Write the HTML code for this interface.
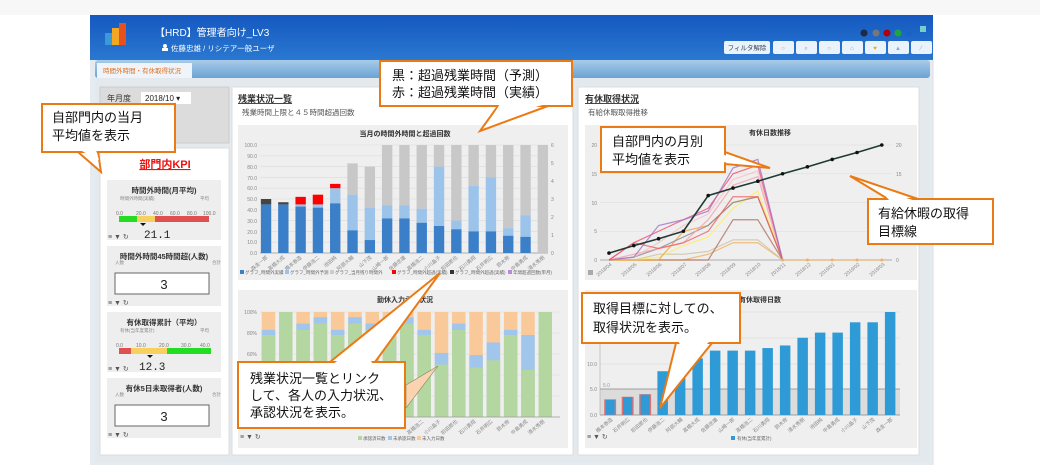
<!DOCTYPE html>
<html><head><meta charset="utf-8"><style>
html,body{margin:0;padding:0;background:#fff;}
svg{display:block;font-family:"Liberation Sans","Noto Sans CJK JP",sans-serif;}
</style></head><body>
<svg width="1040" height="473" viewBox="0 0 1040 473" xmlns="http://www.w3.org/2000/svg">
<defs>
<linearGradient id="hd" x1="0" y1="0" x2="0" y2="1"><stop offset="0" stop-color="#1558c0"/><stop offset="1" stop-color="#2a78d0"/></linearGradient>
<linearGradient id="tb" x1="0" y1="0" x2="0" y2="1"><stop offset="0" stop-color="#a9cbe9"/><stop offset="1" stop-color="#6aa3d3"/></linearGradient>
</defs>
<rect width="1040" height="473" fill="#fff"/>
<rect width="1040" height="15" fill="#f7f7f7"/>
<!-- app frame -->
<rect x="90" y="15" width="843" height="450" fill="#e6ebf0"/>
<rect x="90" y="15" width="843" height="45" fill="url(#hd)"/>
<!-- logo -->
<rect x="105" y="33" width="7" height="12" fill="#3a9ad8"/>
<rect x="112" y="28" width="7" height="17" fill="#f5a623"/>
<rect x="119" y="23" width="7" height="22" fill="#e8501e"/>
<text x="155" y="36" font-size="10" fill="#fff">【HRD】管理者向け_LV3</text>
<circle cx="165" cy="46" r="2" fill="#fff"/><rect x="162" y="48" width="6" height="3" fill="#fff"/>
<text x="171" y="51" font-size="7.5" fill="#fff">佐藤忠雄 / リシテア一般ユーザ</text>
<circle cx="864" cy="33" r="3.5" fill="#1e2a44"/><circle cx="876" cy="33" r="3.5" fill="#777"/><circle cx="887" cy="33" r="3.5" fill="#b00010"/><circle cx="898" cy="33" r="3.5" fill="#1ca640"/><circle cx="909" cy="33" r="3.5" fill="#1a62c8"/>
<rect x="920" y="26" width="6" height="6" fill="#7cc"/>
<rect x="724" y="41" width="46" height="13" rx="2" fill="#eaf2fb"/><text x="747" y="50" font-size="6.5" fill="#345" text-anchor="middle">フィルタ解除</text>
<g fill="#eaf2fb"><rect x="773" y="41" width="21" height="13" rx="2"/><rect x="796" y="41" width="21" height="13" rx="2"/><rect x="819" y="41" width="21" height="13" rx="2"/><rect x="842" y="41" width="21" height="13" rx="2"/><rect x="865" y="41" width="21" height="13" rx="2"/><rect x="888" y="41" width="21" height="13" rx="2"/><rect x="911" y="41" width="21" height="13" rx="2"/></g>
<g fill="#8ab" font-size="6" text-anchor="middle"><text x="783" y="50">○</text><text x="806" y="50">⌕</text><text x="829" y="50">○</text><text x="852" y="50">⌂</text><text x="875" y="50" fill="#f0a500">♥</text><text x="898" y="50">▲</text><text x="921" y="50">⁄</text></g>
<!-- tab bar -->
<rect x="95" y="60" width="835" height="18" rx="3" fill="url(#tb)"/>
<rect x="97" y="63" width="95" height="15" fill="#eef4fa"/>
<text x="103" y="73" font-size="6.5" fill="#e07020">時間外時間・有休取得状況</text>
<rect x="95" y="78" width="835" height="385" fill="#e4e9ee"/>
<!-- left filter -->
<rect x="100" y="87" width="129" height="56" fill="#dcdcdc" stroke="#ccc"/>
<text x="107" y="101" font-size="8" fill="#333">年月度</text>
<rect x="141" y="92" width="50" height="12" fill="#fff"/><text x="145" y="101" font-size="8" fill="#222">2018/10 ▾</text>
<!-- KPI panel -->
<rect x="100" y="148" width="129" height="307" fill="#fff" stroke="#ddd"/>
<text x="165" y="168" font-size="11" font-weight="bold" fill="#f01010" text-anchor="middle" text-decoration="underline">部門内KPI</text>
<g fill="#eee"><rect x="107" y="180" width="114" height="60"/><rect x="107" y="246" width="114" height="60"/><rect x="107" y="312" width="114" height="60"/><rect x="107" y="378" width="114" height="60"/></g>
<g font-size="7.5" font-weight="bold" fill="#333" text-anchor="middle"><text x="164" y="193">時間外時間(月平均)</text><text x="164" y="259">時間外時間45時間超(人数)</text><text x="164" y="325">有休取得累計（平均）</text><text x="164" y="391">有休5日未取得者(人数)</text></g>
<g font-size="4.5" fill="#888"><text x="120" y="200">時間外時間(実績)</text><text x="200" y="200">平均</text><text x="120" y="332">有休(当年度累計)</text><text x="200" y="332">平均</text><text x="115" y="264">人数</text><text x="212" y="264">合計</text><text x="115" y="396">人数</text><text x="212" y="396">合計</text></g>
<g font-size="5" fill="#777"><text x="116" y="215">0.0</text><text x="136" y="215">20.0</text><text x="153" y="215">40.0</text><text x="170" y="215">60.0</text><text x="187" y="215">80.0</text><text x="203" y="215">100.0</text>
<text x="116" y="347">0.0</text><text x="136" y="347">10.0</text><text x="159" y="347">20.0</text><text x="181" y="347">30.0</text><text x="200" y="347">40.0</text></g>
<rect x="119" y="216" width="18" height="6" fill="#22dd22"/><rect x="137" y="216" width="18" height="6" fill="#f8d060"/><rect x="155" y="216" width="54" height="6" fill="#e05050"/>
<rect x="119" y="348" width="12" height="6" fill="#e05050"/><rect x="131" y="348" width="36" height="6" fill="#f8d060"/><rect x="167" y="348" width="44" height="6" fill="#22dd22"/>
<path d="M140 223 l6 0 -3 3z" fill="#111"/><path d="M147 355 l6 0 -3 3z" fill="#111"/>
<text x="144" y="238" font-size="11" fill="#222" font-family="Liberation Mono,monospace">21.1</text>
<text x="139" y="370" font-size="11" fill="#222" font-family="Liberation Mono,monospace">12.3</text>
<rect x="115" y="273" width="94" height="21" fill="#fff" stroke="#666"/><text x="164" y="289" font-size="13" fill="#222" text-anchor="middle">3</text>
<rect x="115" y="405" width="94" height="21" fill="#fff" stroke="#666"/><text x="164" y="421" font-size="13" fill="#222" text-anchor="middle">3</text>
<g font-size="7" fill="#555"><text x="108" y="239">≡ ▼ ↻</text><text x="108" y="305">≡ ▼ ↻</text><text x="108" y="371">≡ ▼ ↻</text><text x="108" y="437">≡ ▼ ↻</text></g>

<!-- middle panel -->
<rect x="232" y="87" width="341" height="368" fill="#fff" stroke="#ddd"/>
<text x="238" y="102" font-size="9" font-weight="bold" fill="#333" text-decoration="underline">残業状況一覧</text>
<text x="242" y="115" font-size="7.5" fill="#555">残業時間上限と４５時間超過回数</text>
<rect x="238" y="125" width="330" height="155" fill="#efefef"/>
<text x="405" y="136" font-size="7" font-weight="bold" fill="#333" text-anchor="middle">当月の時間外時間と超過回数</text>
<g stroke="#dcdcdc" stroke-width="0.6">
<line x1="260" y1="145" x2="548" y2="145"/><line x1="260" y1="155.8" x2="548" y2="155.8"/><line x1="260" y1="166.6" x2="548" y2="166.6"/><line x1="260" y1="177.4" x2="548" y2="177.4"/><line x1="260" y1="188.2" x2="548" y2="188.2"/><line x1="260" y1="199" x2="548" y2="199"/><line x1="260" y1="209.8" x2="548" y2="209.8"/><line x1="260" y1="220.6" x2="548" y2="220.6"/><line x1="260" y1="231.4" x2="548" y2="231.4"/><line x1="260" y1="242.2" x2="548" y2="242.2"/></g>
<line x1="260" y1="253" x2="548" y2="253" stroke="#999" stroke-width="0.7"/>
<g font-size="5" fill="#888" text-anchor="end"><text x="257" y="147">100.0</text><text x="257" y="169">80.0</text><text x="257" y="190">60.0</text><text x="257" y="212">40.0</text><text x="257" y="234">20.0</text><text x="257" y="255">0.0</text><text x="257" y="158">90.0</text><text x="257" y="180">70.0</text><text x="257" y="201">50.0</text><text x="257" y="223">30.0</text><text x="257" y="244">10.0</text></g>
<g font-size="5" fill="#888"><text x="551" y="147">6</text><text x="551" y="165">5</text><text x="551" y="183">4</text><text x="551" y="201">3</text><text x="551" y="219">2</text><text x="551" y="237">1</text><text x="551" y="255">0</text></g>
<g transform="translate(260.5,253) scale(17.3,-1.08)">
<g fill="#c8c8c8"><rect x="5.02" y="54" width="0.6" height="29"/><rect x="6.02" y="42" width="0.6" height="38"/><rect x="7.02" y="44" width="0.6" height="56"/><rect x="8.02" y="44" width="0.6" height="56"/><rect x="9.02" y="41" width="0.6" height="59"/><rect x="10.02" y="80" width="0.6" height="20"/><rect x="11.02" y="30" width="0.6" height="70"/><rect x="12.02" y="62" width="0.6" height="38"/><rect x="13.02" y="70" width="0.6" height="30"/><rect x="14.02" y="23" width="0.6" height="77"/><rect x="15.02" y="35" width="0.6" height="65"/><rect x="16.02" y="0" width="0.6" height="100"/></g>
<g fill="#9cc4ea"><rect x="2.02" y="43" width="0.6" height="2"/><rect x="3.02" y="42" width="0.6" height="3"/><rect x="4.02" y="46" width="0.6" height="14"/><rect x="5.02" y="21" width="0.6" height="33"/><rect x="6.02" y="12" width="0.6" height="30"/><rect x="7.02" y="32" width="0.6" height="12"/><rect x="8.02" y="32" width="0.6" height="12"/><rect x="9.02" y="28" width="0.6" height="13"/><rect x="10.02" y="25" width="0.6" height="55"/><rect x="11.02" y="22" width="0.6" height="8"/><rect x="12.02" y="20" width="0.6" height="42"/><rect x="13.02" y="20" width="0.6" height="50"/><rect x="14.02" y="16" width="0.6" height="7"/><rect x="15.02" y="15" width="0.6" height="20"/></g>
<g fill="#3a7fc8"><rect x="0.02" y="0" width="0.6" height="45"/><rect x="1.02" y="0" width="0.6" height="45"/><rect x="2.02" y="0" width="0.6" height="43"/><rect x="3.02" y="0" width="0.6" height="42"/><rect x="4.02" y="0" width="0.6" height="46"/><rect x="5.02" y="0" width="0.6" height="21"/><rect x="6.02" y="0" width="0.6" height="12"/><rect x="7.02" y="0" width="0.6" height="32"/><rect x="8.02" y="0" width="0.6" height="32"/><rect x="9.02" y="0" width="0.6" height="28"/><rect x="10.02" y="0" width="0.6" height="25"/><rect x="11.02" y="0" width="0.6" height="22"/><rect x="12.02" y="0" width="0.6" height="20"/><rect x="13.02" y="0" width="0.6" height="20"/><rect x="14.02" y="0" width="0.6" height="16"/><rect x="15.02" y="0" width="0.6" height="15"/></g>
<g fill="#444"><rect x="0.02" y="45" width="0.6" height="5"/><rect x="1.02" y="45" width="0.6" height="2"/></g>
<g fill="#f00"><rect x="2.02" y="45" width="0.6" height="7"/><rect x="3.02" y="45" width="0.6" height="9"/><rect x="4.02" y="60" width="0.6" height="4"/></g>
</g>
<g font-size="5" fill="#888">
<text transform="translate(268,258) rotate(-40)" text-anchor="end">森圭一郎</text><text transform="translate(285,258) rotate(-40)" text-anchor="end">高橋大成</text><text transform="translate(302,258) rotate(-40)" text-anchor="end">橋本泰造</text><text transform="translate(320,258) rotate(-40)" text-anchor="end">伊藤浩二</text><text transform="translate(337,258) rotate(-40)" text-anchor="end">池田純</text><text transform="translate(354,258) rotate(-40)" text-anchor="end">阿部大輔</text><text transform="translate(372,258) rotate(-40)" text-anchor="end">山下茂</text><text transform="translate(389,258) rotate(-40)" text-anchor="end">山崎一郎</text><text transform="translate(406,258) rotate(-40)" text-anchor="end">佐藤忠雄</text><text transform="translate(424,258) rotate(-40)" text-anchor="end">高橋浩二</text><text transform="translate(441,258) rotate(-40)" text-anchor="end">小川晶子</text><text transform="translate(458,258) rotate(-40)" text-anchor="end">前田郎也</text><text transform="translate(476,258) rotate(-40)" text-anchor="end">石川勇翔</text><text transform="translate(493,258) rotate(-40)" text-anchor="end">石井明広</text><text transform="translate(510,258) rotate(-40)" text-anchor="end">鈴木修</text><text transform="translate(528,258) rotate(-40)" text-anchor="end">中島勇成</text><text transform="translate(545,258) rotate(-40)" text-anchor="end">清水秀樹</text></g>
<g font-size="4.5" fill="#666"><rect x="240" y="270" width="4" height="4" fill="#3a7fc8"/><text x="245" y="274">グラフ_時間外実績</text><rect x="285" y="270" width="4" height="4" fill="#9cc4ea"/><text x="290" y="274">グラフ_時間外予測</text><rect x="330" y="270" width="4" height="4" fill="#ccc"/><text x="335" y="274">グラフ_当月残り時間外</text><rect x="392" y="270" width="4" height="4" fill="#f00"/><text x="397" y="274">グラフ_時間外超過(実績)</text><rect x="450" y="270" width="4" height="4" fill="#333"/><text x="455" y="274">グラフ_時間外超過(実績)</text><rect x="508" y="270" width="4" height="4" fill="#b8d"/><text x="513" y="274">年間超過回数(単月)</text></g>

<!-- chart 2 -->
<rect x="238" y="290" width="330" height="158" fill="#efefef"/>
<text x="405" y="302" font-size="7" font-weight="bold" fill="#333" text-anchor="middle">勤休入力承認状況</text>
<g stroke="#dcdcdc" stroke-width="0.6"><line x1="260" y1="312" x2="560" y2="312"/><line x1="260" y1="333" x2="560" y2="333"/><line x1="260" y1="354" x2="560" y2="354"/><line x1="260" y1="375" x2="560" y2="375"/><line x1="260" y1="396" x2="560" y2="396"/></g>
<g font-size="5" fill="#888" text-anchor="end"><text x="257" y="314">100%</text><text x="257" y="335">80%</text><text x="257" y="356">60%</text></g>
<g transform="translate(260,417) scale(17.3,-1.05)">
<g fill="#f9c99a"><rect x="0.1" y="0" width="0.78" height="100"/><rect x="2.1" y="0" width="0.78" height="100"/><rect x="3.1" y="0" width="0.78" height="100"/><rect x="4.1" y="0" width="0.78" height="100"/><rect x="5.1" y="0" width="0.78" height="100"/><rect x="6.1" y="0" width="0.78" height="100"/><rect x="7.1" y="0" width="0.78" height="100"/><rect x="8.1" y="0" width="0.78" height="100"/><rect x="9.1" y="0" width="0.78" height="100"/><rect x="10.1" y="0" width="0.78" height="100"/><rect x="11.1" y="0" width="0.78" height="100"/><rect x="12.1" y="0" width="0.78" height="100"/><rect x="13.1" y="0" width="0.78" height="100"/><rect x="14.1" y="0" width="0.78" height="100"/><rect x="15.1" y="0" width="0.78" height="100"/></g>
<g fill="#a0c6ec"><rect x="0.1" y="0" width="0.78" height="83"/><rect x="2.1" y="0" width="0.78" height="89"/><rect x="3.1" y="0" width="0.78" height="95"/><rect x="4.1" y="0" width="0.78" height="83"/><rect x="5.1" y="0" width="0.78" height="95"/><rect x="6.1" y="0" width="0.78" height="89"/><rect x="7.1" y="0" width="0.78" height="95"/><rect x="8.1" y="0" width="0.78" height="95"/><rect x="9.1" y="0" width="0.78" height="83"/><rect x="10.1" y="0" width="0.78" height="61"/><rect x="11.1" y="0" width="0.78" height="89"/><rect x="12.1" y="0" width="0.78" height="59"/><rect x="13.1" y="0" width="0.78" height="71"/><rect x="14.1" y="0" width="0.78" height="83"/><rect x="15.1" y="0" width="0.78" height="78"/></g>
<g fill="#b4d7a2"><rect x="0.1" y="0" width="0.78" height="78"/><rect x="1.1" y="0" width="0.78" height="100"/><rect x="2.1" y="0" width="0.78" height="83"/><rect x="3.1" y="0" width="0.78" height="89"/><rect x="4.1" y="0" width="0.78" height="78"/><rect x="5.1" y="0" width="0.78" height="89"/><rect x="6.1" y="0" width="0.78" height="83"/><rect x="7.1" y="0" width="0.78" height="89"/><rect x="8.1" y="0" width="0.78" height="89"/><rect x="9.1" y="0" width="0.78" height="78"/><rect x="10.1" y="0" width="0.78" height="50"/><rect x="11.1" y="0" width="0.78" height="83"/><rect x="12.1" y="0" width="0.78" height="47"/><rect x="13.1" y="0" width="0.78" height="54"/><rect x="14.1" y="0" width="0.78" height="78"/><rect x="15.1" y="0" width="0.78" height="45"/><rect x="16.1" y="0" width="0.78" height="100"/></g>
</g>
<line x1="260" y1="417" x2="560" y2="417" stroke="#999" stroke-width="0.7"/>
<g font-size="5" fill="#888"><text transform="translate(424,422) rotate(-40)" text-anchor="end">高橋浩二</text><text transform="translate(441,422) rotate(-40)" text-anchor="end">小川晶子</text><text transform="translate(458,422) rotate(-40)" text-anchor="end">前田郎也</text><text transform="translate(476,422) rotate(-40)" text-anchor="end">石川勇翔</text><text transform="translate(493,422) rotate(-40)" text-anchor="end">石井明広</text><text transform="translate(510,422) rotate(-40)" text-anchor="end">鈴木修</text><text transform="translate(528,422) rotate(-40)" text-anchor="end">中島勇成</text><text transform="translate(545,422) rotate(-40)" text-anchor="end">清水秀樹</text></g>
<g font-size="4.5" fill="#666"><rect x="358" y="436" width="4" height="4" fill="#b4d7a2"/><text x="363" y="440">承認済日数</text><rect x="388" y="436" width="4" height="4" fill="#a0c6ec"/><text x="393" y="440">未承認日数</text><rect x="417" y="436" width="4" height="4" fill="#f9c99a"/><text x="422" y="440">未入力日数</text></g>
<text x="240" y="439" font-size="7" fill="#555">≡ ▼ ↻</text>

<!-- right panel -->
<rect x="578" y="87" width="341" height="368" fill="#fff" stroke="#ddd"/>
<text x="585" y="102" font-size="9" font-weight="bold" fill="#333" text-decoration="underline">有休取得状況</text>
<text x="588" y="115" font-size="7.5" fill="#555">有給休暇取得推移</text>
<rect x="585" y="125" width="332" height="155" fill="#efefef"/>
<text x="770" y="135" font-size="7" font-weight="bold" fill="#333" text-anchor="middle">有休日数推移</text>
<g stroke="#dcdcdc" stroke-width="0.6"><line x1="600" y1="145" x2="892" y2="145"/><line x1="600" y1="173.75" x2="892" y2="173.75"/><line x1="600" y1="202.5" x2="892" y2="202.5"/><line x1="600" y1="231.25" x2="892" y2="231.25"/></g>
<line x1="600" y1="260" x2="892" y2="260" stroke="#999" stroke-width="0.7"/>
<g font-size="5" fill="#888" text-anchor="end"><text x="597" y="147">20</text><text x="597" y="176">15</text><text x="597" y="205">10</text><text x="597" y="233">5</text><text x="597" y="262">0</text></g>
<g font-size="5" fill="#888"><text x="896" y="147">20</text><text x="896" y="176">15</text><text x="896" y="205">10</text><text x="896" y="233">5</text><text x="896" y="262">0</text></g>
<g transform="translate(609,260) scale(24.8,-5.75)" fill="none" stroke-width="1.2" stroke-opacity="0.8">
<polyline vector-effect="non-scaling-stroke" stroke="#f0b060" points="0,0 1,0 2,0 3,0 4,1 5,3 6,3 7,0 8,0 9,0 10,0 11,0"/>
<polyline vector-effect="non-scaling-stroke" stroke="#ccc4a8" points="0,0 1,0 2,1 3,1 4,1.5 5,3.5 6,3.5 7,0"/>
<polyline vector-effect="non-scaling-stroke" stroke="#b07060" points="0,0 1,0 2,0 3,0 4,0 5,7 6,7 7,0"/>
<polyline vector-effect="non-scaling-stroke" stroke="#ffee60" points="0,0 1,0 2,0.5 3,2.5 4,4 5,9 6,12 7,0"/>
<polyline vector-effect="non-scaling-stroke" stroke="#f0a040" points="0,0 1,0 2,0 3,5 4,6 5,10 6,11 7,0"/>
<polyline vector-effect="non-scaling-stroke" stroke="#888" points="0,0 1,0.5 2,2 3,4 4,6 5,10 6,11 7,0"/>
<polyline vector-effect="non-scaling-stroke" stroke="#f4a0b0" points="0,0 1,1 2,2 3,3 4,7 5,13 6,14.5 7,0"/>
<polyline vector-effect="non-scaling-stroke" stroke="#f8c0c0" points="0,0 1,0.5 2,3 3,6 4,8 5,14 6,15.5 7,0"/>
<polyline vector-effect="non-scaling-stroke" stroke="#f06060" points="0,0 1,3 2,2 3,3 4,5 5,11 6,11 7,0"/>
<polyline vector-effect="non-scaling-stroke" stroke="#f05070" points="0,0 1,3 2,5 3,7 4,9 5,15 6,16.5 7,0"/>
<polyline vector-effect="non-scaling-stroke" stroke="#a070c0" points="0,0 1,0.5 2,6 3,7 4,8.5 5,16 6,17.5 7,0"/>
<polyline vector-effect="non-scaling-stroke" stroke="#1e3a34" stroke-width="1.6" stroke-opacity="1" points="0,1.2 1,2.5 2,3.7 3,5 4,11.2 5,12.5 6,13.7 7,15 8,16.2 9,17.5 10,18.7 11,20"/>
</g>
<g fill="#111"><circle cx="609" cy="253.1" r="1.8"/><circle cx="633.8" cy="245.6" r="1.8"/><circle cx="658.6" cy="238.7" r="1.8"/><circle cx="683.4" cy="231.25" r="1.8"/><circle cx="708.2" cy="195.6" r="1.8"/><circle cx="733" cy="188.1" r="1.8"/><circle cx="757.8" cy="181.2" r="1.8"/><circle cx="782.6" cy="173.75" r="1.8"/><circle cx="807.4" cy="166.85" r="1.8"/><circle cx="832.2" cy="159.4" r="1.8"/><circle cx="857" cy="152.5" r="1.8"/><circle cx="881.8" cy="145" r="1.8"/></g>
<g fill="#f0b060"><circle cx="782.6" cy="260" r="1.5"/><circle cx="807.4" cy="260" r="1.5"/><circle cx="832.2" cy="260" r="1.5"/><circle cx="857" cy="260" r="1.5"/><circle cx="881.8" cy="260" r="1.5"/></g>
<g font-size="5" fill="#888" text-anchor="end"><text transform="translate(612,265) rotate(-40)">2018/04</text><text transform="translate(637,265) rotate(-40)">2018/05</text><text transform="translate(662,265) rotate(-40)">2018/06</text><text transform="translate(687,265) rotate(-40)">2018/07</text><text transform="translate(711,265) rotate(-40)">2018/08</text><text transform="translate(736,265) rotate(-40)">2018/09</text><text transform="translate(761,265) rotate(-40)">2018/10</text><text transform="translate(786,265) rotate(-40)">2018/11</text><text transform="translate(811,265) rotate(-40)">2018/12</text><text transform="translate(835,265) rotate(-40)">2019/01</text><text transform="translate(860,265) rotate(-40)">2019/02</text><text transform="translate(885,265) rotate(-40)">2019/03</text></g>
<rect x="588" y="270" width="5" height="5" fill="#aaa"/>

<!-- chart 4 -->
<rect x="585" y="290" width="332" height="158" fill="#efefef"/>
<text x="760" y="302" font-size="7" font-weight="bold" fill="#333" text-anchor="middle">有休取得日数</text>
<rect x="600" y="389" width="300" height="26" fill="#dcdcdc"/>
<g stroke="#d4d4d4" stroke-width="0.6"><line x1="600" y1="312" x2="900" y2="312"/><line x1="600" y1="338" x2="900" y2="338"/><line x1="600" y1="364" x2="900" y2="364"/></g>
<line x1="600" y1="389" x2="900" y2="389" stroke="#888" stroke-width="0.8"/>
<line x1="600" y1="415" x2="900" y2="415" stroke="#888" stroke-width="0.8"/>
<line x1="600" y1="310" x2="600" y2="415" stroke="#aaa" stroke-width="0.6"/>
<g font-size="5" fill="#888" text-anchor="end"><text x="597" y="366">10.0</text><text x="597" y="391">5.0</text><text x="597" y="417">0.0</text></g>
<text x="603" y="387" font-size="5" fill="#999">5.0</text>
<g transform="translate(600,415) scale(17.5,-5.15)" fill="#2f9bd6">
<rect x="0.28" y="0" width="0.6" height="3" stroke="#e07070" stroke-width="0.08"/><rect x="1.28" y="0" width="0.6" height="3.5" stroke="#e07070" stroke-width="0.08"/><rect x="2.28" y="0" width="0.6" height="4" stroke="#e07070" stroke-width="0.08"/>
<rect x="3.28" y="0" width="0.6" height="8.5"/><rect x="4.28" y="0" width="0.6" height="9"/><rect x="5.28" y="0" width="0.6" height="11"/><rect x="6.28" y="0" width="0.6" height="12.5"/><rect x="7.28" y="0" width="0.6" height="12.5"/><rect x="8.28" y="0" width="0.6" height="12.5"/><rect x="9.28" y="0" width="0.6" height="13"/><rect x="10.28" y="0" width="0.6" height="13.5"/><rect x="11.28" y="0" width="0.6" height="15"/><rect x="12.28" y="0" width="0.6" height="16"/><rect x="13.28" y="0" width="0.6" height="16"/><rect x="14.28" y="0" width="0.6" height="18"/><rect x="15.28" y="0" width="0.6" height="18"/><rect x="16.28" y="0" width="0.6" height="20"/>
</g>
<g font-size="5" fill="#888" text-anchor="end"><text transform="translate(613,420) rotate(-40)">橋本泰造</text><text transform="translate(630,420) rotate(-40)">石井明広</text><text transform="translate(648,420) rotate(-40)">前田郎也</text><text transform="translate(665,420) rotate(-40)">伊藤浩二</text><text transform="translate(683,420) rotate(-40)">阿部大輔</text><text transform="translate(700,420) rotate(-40)">高橋大成</text><text transform="translate(718,420) rotate(-40)">佐藤忠雄</text><text transform="translate(735,420) rotate(-40)">山崎一郎</text><text transform="translate(753,420) rotate(-40)">高橋浩二</text><text transform="translate(770,420) rotate(-40)">石川勇翔</text><text transform="translate(788,420) rotate(-40)">鈴木修</text><text transform="translate(805,420) rotate(-40)">清水秀樹</text><text transform="translate(823,420) rotate(-40)">池田純</text><text transform="translate(840,420) rotate(-40)">中島勇成</text><text transform="translate(858,420) rotate(-40)">小川晶子</text><text transform="translate(875,420) rotate(-40)">山下茂</text><text transform="translate(893,420) rotate(-40)">森圭一郎</text></g>
<rect x="731" y="436" width="4" height="4" fill="#2f9bd6"/><text x="737" y="440" font-size="4.5" fill="#666">有休(当年度累計)</text>
<text x="587" y="439" font-size="7" fill="#555">≡ ▼ ↻</text>
<line x1="933" y1="60" x2="933" y2="465" stroke="#dde" stroke-width="1"/>

<!-- callouts -->
<g stroke="#ea7a14" stroke-width="2" fill="#fff" stroke-linejoin="miter">
<polygon points="498,106 548,106 480,131"/>
<rect x="380" y="61" width="192" height="45"/>
<polygon points="78,152 98,152 101,172"/>
<rect x="42" y="104" width="133" height="48"/>
<polygon points="375,362 330,362 440,273"/>
<rect x="238" y="362" width="167" height="66"/>
<polygon points="725,152 725,164 770,168"/>
<rect x="601" y="127" width="124" height="45"/>
<polygon points="888,199 918,199 850,176"/>
<rect x="868" y="199" width="125" height="45"/>
<polygon points="676,343 712,343 660,408"/>
<rect x="582" y="293" width="158" height="50"/>
</g>
<g fill="#fff"><polygon points="500,104 546,104 490,120"/><polygon points="80,150 96,150 99,160"/><polygon points="373,364 333,364 360,345"/><polygon points="723,154 723,162 740,164"/><polygon points="890,201 916,201 880,190"/><polygon points="678,341 710,341 690,360"/></g>
<polygon points="406,385 406,408 438,366" fill="#fbd3b0" stroke="#7a8a5a" stroke-width="0.6"/>
<g font-size="13" fill="#111" font-family="Liberation Sans,Noto Sans CJK JP,sans-serif">
<text x="392" y="80">黒：超過残業時間（予測）</text>
<text x="392" y="97">赤：超過残業時間（実績）</text>
<text x="52" y="122">自部門内の当月</text>
<text x="52" y="140">平均値を表示</text>
<text x="250" y="383">残業状況一覧とリンク</text>
<text x="250" y="400">して、各人の入力状況、</text>
<text x="250" y="417">承認状況を表示。</text>
<text x="612" y="146">自部門内の月別</text>
<text x="612" y="164">平均値を表示</text>
<text x="878" y="218">有給休暇の取得</text>
<text x="878" y="236">目標線</text>
<text x="593" y="313">取得目標に対しての、</text>
<text x="593" y="332">取得状況を表示。</text>
</g>
</svg>
</body></html>
